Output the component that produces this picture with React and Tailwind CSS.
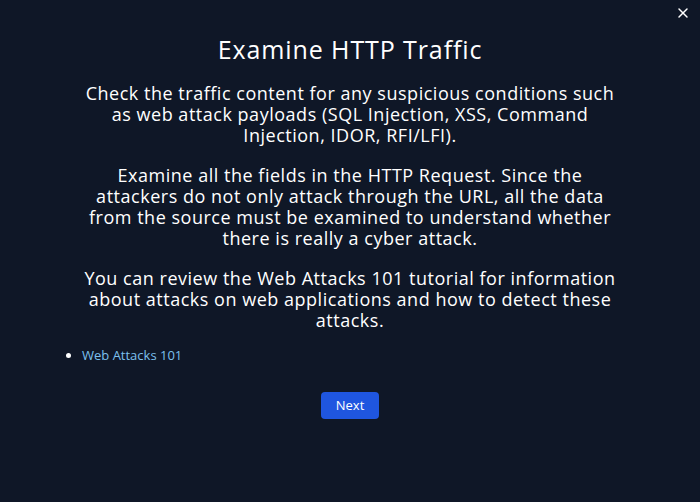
import { X } from "lucide-react";

const paragraphs = [
    "Check the traffic content for any suspicious conditions such as web attack payloads (SQL Injection, XSS, Command Injection, IDOR, RFI/LFI).",
    "Examine all the fields in the HTTP Request. Since the attackers do not only attack through the URL, all the data from the source must be examined to understand whether there is really a cyber attack.",
    "You can review the Web Attacks 101 tutorial for information about attacks on web applications and how to detect these attacks.",
];

export default function App() {
    return (
        <div className="relative w-[700px] h-[502px] bg-[#0f1727] text-white font-['Open_Sans',sans-serif] overflow-hidden">
            <button className="absolute top-[1px] right-[5px] p-1 text-white" aria-label="Close">
                <X className="w-[16px] h-[16px]" strokeWidth={2.2} />
            </button>

            <div className="flex flex-col items-center pt-[34px]">
                <h2 className="text-[25px] leading-[30px] font-medium tracking-[0.9px]">Examine HTTP Traffic</h2>

                <div className="mt-[19px] w-[536px] flex flex-col gap-[19px] text-center text-[18px] leading-[21px] tracking-[0.52px]">
                    {paragraphs.map((p) => (
                        <p key={p.slice(0, 12)}>{p}</p>
                    ))}
                </div>
            </div>

            <ul className="mt-[15px] ml-[82px] list-disc text-[13px] leading-[18px] marker:text-white">
                <li>
                    <a href="#" className="text-[#7cc0ee]">Web Attacks 101</a>
                </li>
            </ul>

            <div className="flex justify-center mt-[28px]">
                <button className="w-[58px] h-[27px] rounded-[4px] bg-[#1f56e0] text-[13px] text-white">Next</button>
            </div>
        </div>
    );
}
